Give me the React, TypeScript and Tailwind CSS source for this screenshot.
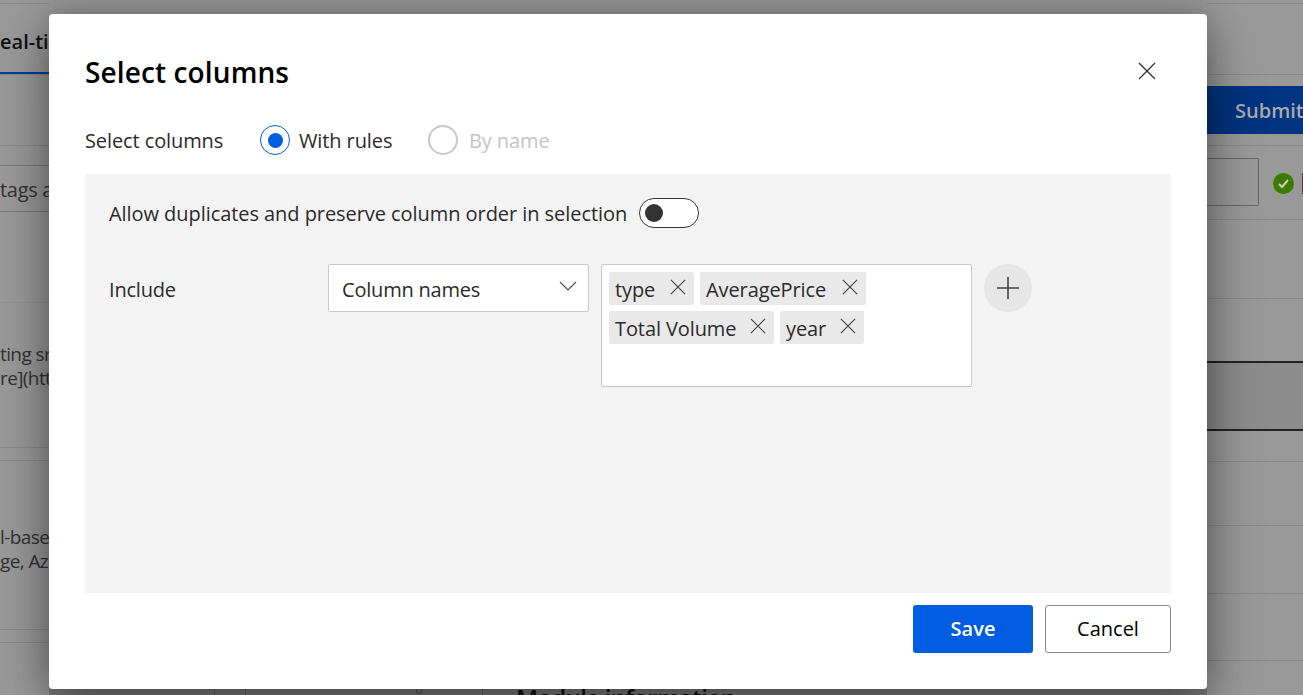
import React from 'react';

const font = "font-['Open_Sans','Noto_Sans',sans-serif]";

function XIcon({ size, className }: { size: number; className?: string }) {
  return (
    <svg width={size} height={size} viewBox="0 0 18 18" className={className} fill="none" stroke="currentColor" strokeWidth="1.3">
      <path d="M1 1 L17 17 M17 1 L1 17" />
    </svg>
  );
}

function Chip({ label, width }: { label: string; width: string }) {
  return (
    <div className={`flex h-[33px] items-center justify-between rounded-[2px] bg-[#e9e9e9] pl-1.5 pr-2 ${width}`}>
      <span className="pt-0.5 text-[20px] tracking-[-0.1px] text-[#2b2b2b]">{label}</span>
      <XIcon size={16} className="mb-1 text-[#444]" />
    </div>
  );
}

function Background() {
  return (
    <div className="flex h-screen w-full overflow-hidden bg-[#999999] text-[20px] text-[#333]">
      <div className="w-[49px] shrink-0 overflow-hidden whitespace-nowrap">
        <div className="h-1 border-b border-[#888]" />
        <div className="flex h-[71px] flex-col justify-end border-b border-[#888]">
          <div className="h-[45px] font-semibold text-[#111]">eal-ti</div>
          <div className="h-[2px] bg-[#003d99]" />
        </div>
        <div className="h-[71px] border-b border-[#888]" />
        <div className="h-[19px]" />
        <div className="flex h-[47px] items-center border-y border-[#777] pt-0.5 tracking-[-0.3px] text-[#333]">tags a</div>
        <div className="h-[91px] border-b border-[#939393]" />
        <div className="h-[145px] border-b border-[#888] pt-[39px] text-[19px] leading-6 tracking-[-0.6px]">
          <div>ting sr</div>
          <div>re](http</div>
        </div>
        <div className="h-[13px] border-b border-[#888]" />
        <div className="h-[169px] border-b border-[#888] pt-[64px] text-[19px] leading-6 tracking-[-0.6px]">
          <div>l-based</div>
          <div>ge, Azu</div>
        </div>
        <div className="h-[13px] border-b border-[#888]" />
      </div>

      <div className="flex w-[1158px] shrink-0 items-end">
        <div className="flex h-[6px] w-full overflow-hidden bg-[#7c7c7c]">
          <div className="w-[166px] border-r border-[#666]" />
          <div className="w-[31px] border-r border-[#666]" />
          <div className="flex w-[237px] border-r border-[#666] pl-[170px]">
            <div className="h-[5px] w-[6px] rounded-b-full border border-t-0 border-[#555]" />
          </div>
          <div className="ml-[33px] whitespace-nowrap text-[24px] font-semibold leading-[17px] tracking-[-0.7px] text-[#111]">Module information</div>
        </div>
      </div>

      <div className="flex-1 overflow-hidden whitespace-nowrap">
        <div className="h-1 border-b border-[#888]" />
        <div className="h-[71px] border-b border-[#888]" />
        <div className="mt-[11px] flex h-12 items-center bg-[#003380] pl-[28px] pt-0.5 font-semibold text-[#aaa]">Submit</div>
        <div className="h-[12px] border-b border-[#888]" />
        <div className="flex h-[74px] items-start border-b border-[#888] pt-[12px]">
          <div className="h-12 w-[52px] shrink-0 rounded-r-[2px] border border-l-0 border-[#666]" />
          <div className="ml-[14px] mt-[15px] flex h-[21px] w-[21px] shrink-0 items-center justify-center rounded-full bg-[#3d7a00]">
            <svg width="13" height="13" viewBox="0 0 13 13" fill="none" stroke="#ccc" strokeWidth="2">
              <path d="M2 7 L5 10 L11 3" />
            </svg>
          </div>
          <div className="ml-2 mt-[15px] h-[21px] w-[3px] shrink-0 bg-[#6b3a30]" />
        </div>
        <div className="h-[79px] border-b border-[#888]" />
        <div className="h-[64px] border-b-2 border-[#222]" />
        <div className="h-[68px] border-b-2 border-[#222] bg-[#8c8c8c]" />
        <div className="h-[31px] border-b border-[#888]" />
        <div className="h-[64px] border-b border-[#888]" />
        <div className="h-[68px] border-b border-[#888]" />
        <div className="h-[67px] border-b border-[#888]" />
      </div>
    </div>
  );
}

export default function App() {
  return (
    <div className={`relative h-screen w-full overflow-hidden ${font}`}>
      <Background />

      <div className="absolute left-[49px] top-[14px] flex h-[675px] w-[1158px] flex-col rounded-[4px] bg-white px-9 shadow-[0_26px_58px_rgba(0,0,0,0.28),0_0_36px_rgba(0,0,0,0.3)]">
        <div className="mt-[38px] flex h-10 items-center justify-between">
          <h1 className="text-[28px] font-semibold tracking-[0.12px] text-black">Select columns</h1>
          <XIcon size={18} className="mr-[15px] mt-[-2px] text-[#333]" />
        </div>

        <div className="mt-[33px] flex h-[30px] items-center text-[20px] tracking-[-0.1px] text-[#2b2b2b]">
          <span className="w-[175px] pt-px">Select columns</span>
          <div className="flex h-[30px] w-[30px] items-center justify-center rounded-full border border-[#005ce0]">
            <div className="h-[15px] w-[15px] rounded-full bg-[#005ce0]" />
          </div>
          <span className="ml-[9px] w-[129px] pt-px">With rules</span>
          <div className="h-[30px] w-[30px] rounded-full border-2 border-[#c8c8c8]" />
          <span className="ml-[11px] pt-px text-[#c4c4c4]">By name</span>
        </div>

        <div className="mt-[19px] h-[419px] bg-[#f3f3f3] px-6 pt-6 text-[20px] text-[#2b2b2b]">
          <div className="flex h-[30px] items-center">
            <span className="w-[530px] pt-px tracking-[-0.06px]">Allow duplicates and preserve column order in selection</span>
            <div className="flex h-[30px] w-[60px] items-center rounded-full border border-[#333] bg-white pl-[5px]">
              <div className="h-[18px] w-[18px] rounded-full bg-[#333]" />
            </div>
          </div>

          <div className="mt-9 flex items-start">
            <span className="flex h-12 w-[219px] items-center pt-1 tracking-[-0.2px]">Include</span>
            <div className="flex h-12 w-[261px] items-center justify-between rounded-[2px] border border-[#c8c8c8] bg-white pl-[13px] pr-[11px]">
              <span className="pt-1 tracking-[-0.2px]">Column names</span>
              <svg width="18" height="10" viewBox="0 0 18 10" fill="none" stroke="#555" strokeWidth="1.2" className="mb-1">
                <path d="M1 1 L9 9 L17 1" />
              </svg>
            </div>
            <div className="ml-3 flex h-[123px] w-[371px] flex-wrap content-start gap-1.5 rounded-[2px] border border-[#c8c8c8] bg-white px-[7px] pt-[7px]">
              <Chip label="type" width="w-[85px]" />
              <Chip label="AveragePrice" width="w-[166px]" />
              <Chip label="Total Volume" width="w-[165px]" />
              <Chip label="year" width="w-[84px]" />
            </div>
            <div className="ml-3 flex h-12 w-12 items-center justify-center rounded-full bg-[#e6e6e6]">
              <svg width="24" height="24" viewBox="0 0 24 24" fill="none" stroke="#444" strokeWidth="1.6">
                <path d="M12 1 V23 M1 12 H23" />
              </svg>
            </div>
          </div>
        </div>

        <div className="mt-3 flex justify-end gap-3 text-[20px]">
          <button className="h-12 w-[120px] rounded-[3px] bg-[#005ce0] font-semibold text-white">Save</button>
          <button className="h-12 w-[126px] rounded-[3px] border border-[#8a8a8a] bg-white text-black">Cancel</button>
        </div>
      </div>
    </div>
  );
}
